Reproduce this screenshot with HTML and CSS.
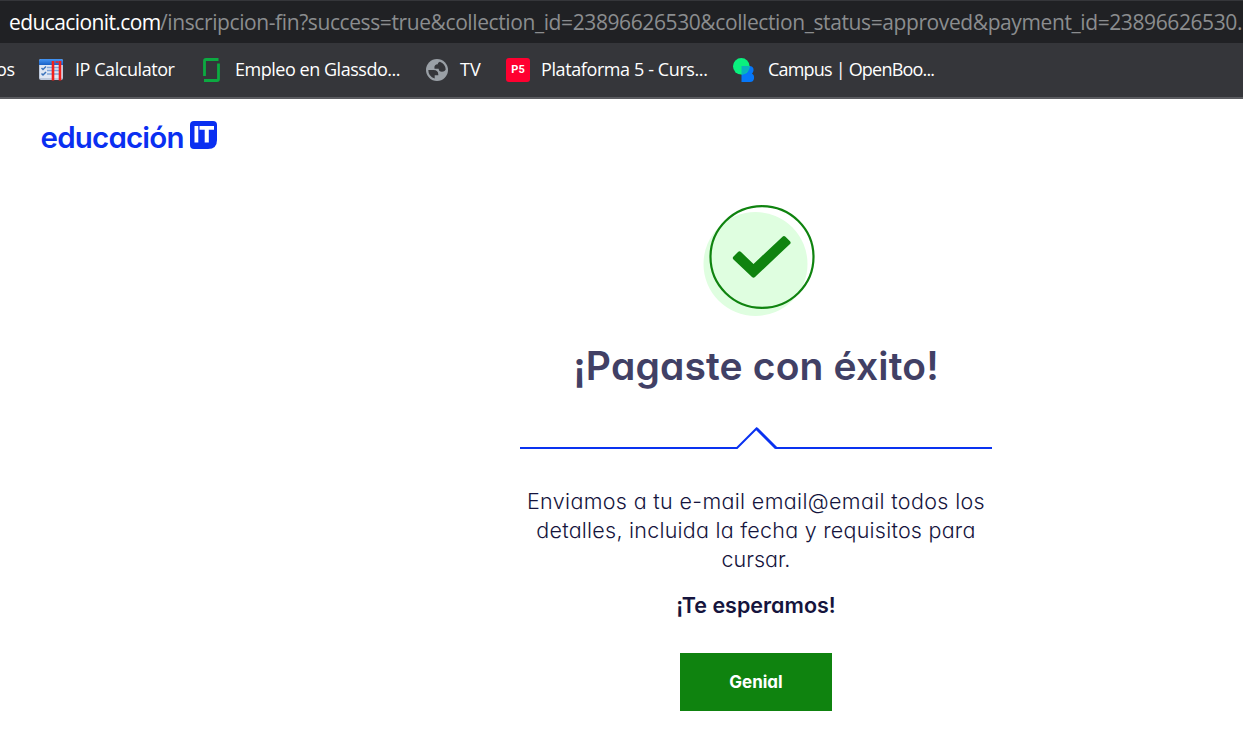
FILE: index.html
```
<!DOCTYPE html>
<html lang="es">
<head>
<meta charset="utf-8">
<title>educaciónIT</title>
<link rel="stylesheet" href="styles.css">
</head>
<body>
<div class="address"><span class="host">educacionit.com</span><span class="path">/inscripcion-fin?success=true&amp;collection_id=23896626530&amp;collection_status=approved&amp;payment_id=23896626530.</span></div>
<nav class="bookmarks">
  <div class="bm bm-cut"><span>os</span></div>
  <div class="bm bm-ip">
    <svg width="24" height="22" viewBox="0 0 24 22"><defs><linearGradient id="win" x2="0" y2="1"><stop stop-color="#4596f5"/><stop offset="1" stop-color="#1860c5"/></linearGradient></defs><rect width="24" height="21" rx="2" fill="#bdc9dc"/><path d="M0 6V2Q0 0 2 0H22Q24 0 24 2V6Z" fill="url(#win)"/><rect x="1" y="6" width="22" height="13" fill="#dfe7f3"/><path d="M2.500 9l1.500 1.500 3-3M2.500 14.500l1.500 1.500 3-3" fill="none" stroke="#3972ba" stroke-width="1.500"/><path d="M8 8.500h13M8 11.500h13M8 15h13" stroke="#7fa5da" stroke-width="1.500"/><path d="M14 2v19.500M21 2v19.500" stroke="#f01f1c" stroke-width="2.600"/><path d="M16.500 3h3" stroke="#f01f1c" stroke-width="1.500"/></svg>
    <span>IP Calculator</span>
  </div>
  <div class="bm bm-glass">
    <svg width="18" height="24" viewBox="0 0 18 24"><path d="M1.500 18V3Q1.500 1.500 3 1.500H15.500M15.500 5.500V21Q15.500 22.500 14 22.500H1" fill="none" stroke="#0caa41" stroke-width="2.800"/></svg>
    <span>Empleo en Glassdo...</span>
  </div>
  <div class="bm bm-tv">
    <svg width="22" height="22" viewBox="0 0 22 22"><circle cx="11" cy="11" r="11" fill="#9aa0a6"/><path d="M2.300 11H7.500C10.800 11 12.300 12.500 12.300 15.700V16.300H8.700V19.400A8.800 8.800 0 0 1 2.300 11ZM13.800 2.700A8.800 8.800 0 0 1 19.700 10.500C18.900 12 17.700 12.700 16 12.700 13.700 12.700 12.700 11.700 12.700 9.800H8.500C8 6.700 9.200 5.200 11.800 5.200 11.800 4 12.500 3.300 13.800 2.700Z" fill="#35363a"/></svg>
    <span>TV</span>
  </div>
  <div class="bm bm-p5">
    <b class="p5">P5</b>
    <span>Plataforma 5 - Curs...</span>
  </div>
  <div class="bm bm-campus">
    <svg width="22" height="24" viewBox="0 0 22 24"><path d="M8.500 8H17Q21 8.500 20.500 12.500 20.300 14.500 19 15.500 21.500 17 21 20.500 20.500 24 17 24H8.500Z" fill="#0677f9"/><circle cx="8.300" cy="8.300" r="8.300" fill="#0af17e"/><path d="M8.500 8h8.100a8.300 8.300 0 0 1-8.100 8.600Z" fill="#08b3bc"/></svg>
    <span>Campus | OpenBoo...</span>
  </div>
</nav>
<header class="brand">
  <svg width="180" height="34" viewBox="0 0 180 34"><text class="word" x="0.500" y="31" textLength="144">educación</text><path d="M154 4H173Q177 4 177 8V23Q177 32 168 32H154Q150 32 150 28V8Q150 4 154 4Z" fill="#0a2ff1"/><path d="M154.500 9h3.800v16.500h-3.800zM159.500 9h14.500v3.800h-5.200v12.700h-4.100v-12.700H159.500z" fill="#fff"/></svg>
</header>
<main class="confirm">
  <svg class="check" width="112" height="112" viewBox="0 0 112 112"><circle cx="52.500" cy="59" r="52" fill="#dffee0"/><ellipse cx="59" cy="52" rx="51.500" ry="50.800" fill="none" stroke="#0f830f" stroke-width="2.200"/><path d="M30.500 51.500 35 47Q36.500 45.500 38 47L50.500 59 79.500 31.700Q81 30.300 82.500 31.800L87 36.300Q88.300 37.600 87 39L52 72Q50.500 73.300 49 72L30.500 54.500Q29 53 30.500 51.500Z" fill="#0f830f"/></svg>
  <h1>¡Pagaste con éxito!</h1>
  <svg class="divider" width="472" height="24" viewBox="0 0 472 24"><path d="M0 22H217L236.500 2.500 256 22H472" fill="none" stroke="#0a32f0" stroke-width="2"/><path d="M236.500 2.500 256 22" stroke="#0a32f0" stroke-width="2.800"/></svg>
  <p class="msg"><span class="l1">Enviamos a tu e-mail email@email todos los</span><br><span class="l2">detalles, incluida la fecha y requisitos para</span><br><span class="l3">cursar.</span></p>
  <p class="bye"><span>¡Te esperamos!</span></p>
  <button class="go"><span>Genial</span></button>
</main>
</body>
</html>
```
FILE: styles.css
```
* { box-sizing: border-box; }
body { margin: 0; width: 1243px; height: 739px; overflow: hidden; background: #fff; font-family: "Inter", sans-serif; font-feature-settings: "cv11"; }
.address { height: 43px; border-top: 1px solid #35363a; background: #202124; padding-left: 9px; display: flex; align-items: center; font: 21px/42px "Open Sans", sans-serif; white-space: nowrap; overflow: hidden; }
.host { color: #fff; width: 151px; flex: none; letter-spacing: -0.600px; }
.path { color: #8b8d8f; letter-spacing: -0.400px; }
.bookmarks { height: 56px; background: #35363a; border-bottom: 2px solid #5b5c60; display: flex; align-items: center; color: #fff; font: 18px/54px "Open Sans", sans-serif; white-space: nowrap; }
.bm { display: flex; align-items: center; flex: none; }
.bm svg { flex: none; }
.bm span { position: relative; top: -1px; }
.bm-cut { width: 39px; }
.bm-cut span { margin-left: -4px; letter-spacing: -0.400px; }
.bm-ip { width: 164px; gap: 12px; letter-spacing: -0.440px; }
.bm-glass { width: 223px; gap: 14px; letter-spacing: -0.470px; }
.bm-tv { width: 80px; gap: 12px; }
.bm-p5 { width: 227px; gap: 11px; letter-spacing: -0.400px; }
.bm-campus { gap: 13px; letter-spacing: -0.800px; }
.p5 { width: 24px; height: 24px; border-radius: 3px; background: #ff0030; font: bold 11px/24px Roboto, sans-serif; text-align: center; letter-spacing: 0; }
.brand { height: 106px; padding: 18px 0 0 40px; }
.brand svg { display: block; }
.word { font-size: 29.500px; font-weight: 600; fill: #0a2ff1; }
.confirm { width: 472px; margin-left: 520px; display: flex; flex-direction: column; align-items: center; color: #15143d; }
.check { display: block; margin-left: 5px; }
h1 { margin: 19px 0 0; font-size: 39px; line-height: 60px; font-weight: 600; color: #414065; white-space: nowrap; letter-spacing: 0.160px; }
.divider { display: block; margin-top: 30px; }
.msg { margin: 37px 0 0; font-size: 21.500px; line-height: 29px; font-weight: 300; text-align: center; white-space: nowrap; }
.l1 { letter-spacing: 0.340px; }
.l2 { letter-spacing: 0.240px; }
.bye { margin: 17px 0 0; font-size: 21.500px; line-height: 29px; font-weight: 600; }
.go { margin: 33px 0 0; width: 152px; height: 58px; padding: 0; border: 0; background: #0f830f; color: #fff; font: 700 17px/58px "Inter", sans-serif; font-feature-settings: "cv11"; }
```
